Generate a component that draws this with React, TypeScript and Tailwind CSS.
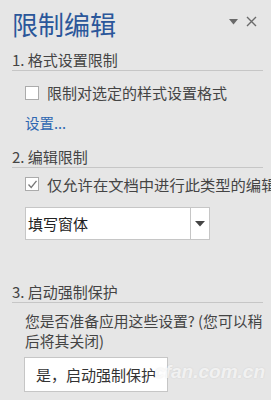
import React from 'react';

const font = { fontFamily: '"Noto Sans CJK SC", "Liberation Sans", sans-serif' };

function SectionHeading({ children }: { children: React.ReactNode }) {
  return (
    <div className="h-[21px] border-b border-[#c6c6c6] text-[15px] leading-[20px] text-[#444444]">
      {children}
    </div>
  );
}

function Checkbox({ checked }: { checked?: boolean }) {
  return (
    <span className="flex h-[14px] w-[14px] shrink-0 items-center justify-center border border-[#ababab] bg-white">
      {checked && (
        <svg width="11" height="11" viewBox="0 0 11 11" fill="none">
          <path d="M1.5 5.5 L4.2 8.5 L9.5 1.8" stroke="#777777" strokeWidth="1.3" />
        </svg>
      )}
    </span>
  );
}

export default function App() {
  return (
    <div
      className="relative h-[400px] w-[271px] overflow-hidden bg-[#e6e6e6] pl-[12px] pr-[8px] text-[#444444]"
      style={font}
    >
      {/* Header */}
      <div className="flex h-[42px] items-start justify-between pt-[6px]">
        <div className="h-[36px] text-[26px] leading-[36px] text-[#2b579a]">限制编辑</div>
        <div className="flex items-center gap-[8px] pt-[10px] pr-[6px]">
          <svg width="9" height="6" viewBox="0 0 9 6">
            <path d="M0 0 H9 L4.5 5.5 Z" fill="#6a6a6a" />
          </svg>
          <svg width="11" height="11" viewBox="0 0 11 11">
            <path d="M1 1 L10 10 M10 1 L1 10" stroke="#6a6a6a" strokeWidth="1.4" />
          </svg>
        </div>
      </div>

      {/* 1 */}
      <div className="mt-[8px]">
        <SectionHeading>1. 格式设置限制</SectionHeading>
        <div className="mt-[12px] flex h-[20px] items-center gap-[8px] pl-[13px] text-[15px] leading-[20px] whitespace-nowrap">
          <Checkbox />
          <span>限制对选定的样式设置格式</span>
        </div>
        <div className="mt-[10px] h-[20px] pl-[13px] text-[14.5px] leading-[20px] text-[#2e67b1]">设置...</div>
      </div>

      {/* 2 */}
      <div className="mt-[14px]">
        <SectionHeading>2. 编辑限制</SectionHeading>
        <div className="mt-[6px] flex h-[20px] items-center gap-[8px] pl-[13px] text-[15.3px] leading-[20px] whitespace-nowrap">
          <Checkbox checked />
          <span>仅允许在文档中进行此类型的编辑</span>
        </div>
        <div className="mt-[13px] ml-[13px] flex h-[33px] w-[185px] border border-[#c6c6c6] bg-white">
          <div className="flex flex-1 items-center pl-[2px] text-[15px] leading-[20px] text-[#222222]">填写窗体</div>
          <div className="flex w-[19px] items-center justify-center border-l border-[#c6c6c6]">
            <svg width="10" height="6" viewBox="0 0 10 6">
              <path d="M0 0 H10 L5 5.5 Z" fill="#444444" />
            </svg>
          </div>
        </div>
      </div>

      {/* 3 */}
      <div className="mt-[42px]">
        <SectionHeading>3. 启动强制保护</SectionHeading>
        <p className="mt-[8px] pl-[13px] text-[14.8px] leading-[20px]">
          您是否准备应用这些设置? (您可以稍后将其关闭)
        </p>
        <div className="mt-[6px] ml-[12px] flex h-[35px] w-[144px] items-center justify-center border border-[#c6c6c6] bg-white text-[15px] leading-[20px] text-[#333333]">
          是，启动强制保护
        </div>
      </div>

      {/* watermark */}
      <div
        className="absolute bottom-[14px] right-[6px] text-[19px] font-bold italic text-white/70"
        style={{ fontFamily: '"Liberation Sans", sans-serif', textShadow: '0 0 2px rgba(0,0,0,0.1)' }}
      >
        cfan.com.cn
      </div>
    </div>
  );
}
